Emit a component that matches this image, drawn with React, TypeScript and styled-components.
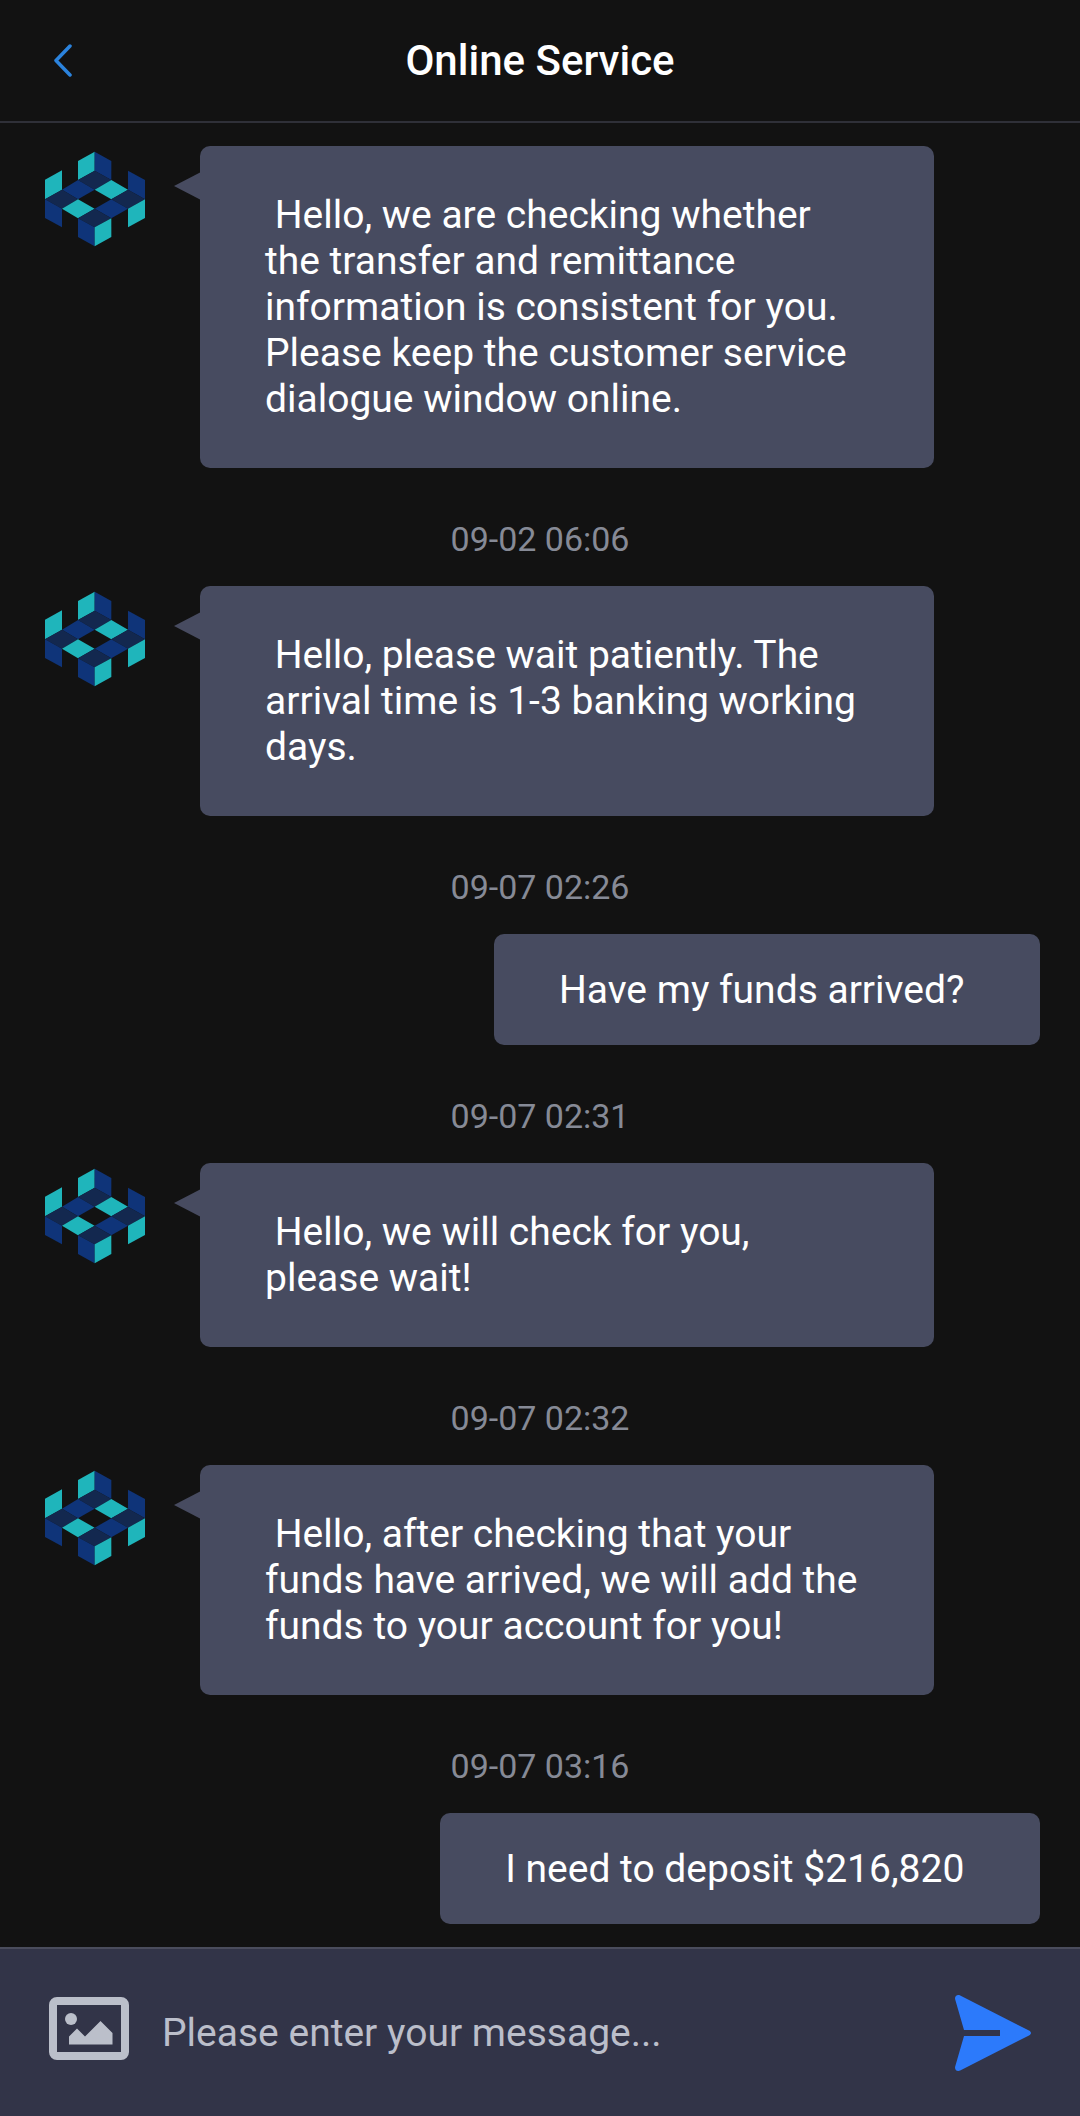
import React, { useState } from "react";
import styled, { createGlobalStyle } from "styled-components";

const GlobalStyle = createGlobalStyle`
  *, *::before, *::after { box-sizing: border-box; }
  body {
    margin: 0;
    background: #121212;
    color: #ffffff;
    font-family: Roboto, "Noto Sans", sans-serif;
    font-size: 39px;
    line-height: 46px;
  }
`;

const Page = styled.div`
  display: flex;
  flex-direction: column;
  min-height: 100vh;
`;

const Header = styled.header`
  display: grid;
  grid-template-columns: 128px 1fr 128px;
  align-items: center;
  border-bottom: 2px solid #2f3038;
`;

const Title = styled.h1`
  margin: 0;
  padding: 38px 0 37px;
  font-size: 42px;
  font-weight: 500;
  line-height: 46px;
  text-align: center;
`;

const IconButton = styled.button`
  display: flex;
  align-items: center;
  flex: none;
  padding: 0;
  border: 0;
  background: none;
  cursor: pointer;
`;

const BackButton = styled(IconButton)`
  height: 100%;
  padding-left: 53px;
`;

const Chat = styled.main`
  flex: 1;
  padding: 23px 40px 23px 44px;
`;

const Time = styled.time`
  display: block;
  margin: 51px 0 27px;
  padding-right: 4px;
  color: #868a96;
  font-size: 34px;
  line-height: 40px;
  text-align: center;
`;

const Row = styled.div<{ $own: boolean }>`
  display: flex;
  align-items: flex-start;
  justify-content: ${(p) => (p.$own ? "flex-end" : "flex-start")};
  gap: 54px;
  padding-right: ${(p) => (p.$own ? "0" : "106px")};
`;

const Avatar = styled.svg`
  flex: none;
  width: 102px;
  height: 96px;
  margin-top: 5px;
`;

const Bubble = styled.p<{ $own: boolean }>`
  position: relative;
  margin: 0;
  padding: ${(p) => (p.$own ? "33px 66px 32px 65px" : "46px 65px")};
  border-radius: 10px;
  background: #474b60;
  white-space: pre-wrap;

  &::before {
    content: "";
    display: ${(p) => (p.$own ? "none" : "block")};
    position: absolute;
    top: 26px;
    left: -26px;
    width: 27px;
    height: 28px;
    background: inherit;
    clip-path: polygon(0 50%, 100% 0, 100% 100%);
  }
`;

const Composer = styled.form`
  display: flex;
  align-items: center;
  height: 169px;
  padding: 0 48px 0 49px;
  border-top: 2px solid #4a4c5c;
  background: #323448;
`;

const MessageInput = styled.input`
  flex: 1;
  min-width: 0;
  margin: 0 33px;
  padding: 0;
  border: 0;
  outline: 0;
  background: none;
  color: #ffffff;
  font: inherit;

  &::placeholder {
    color: #bbbeca;
    opacity: 1;
  }
`;

const TEAL = "#1fb5bb";
const BLUE = "#0f3479";
const NAVY = "#13284f";

const cubeFaces: [string, string][] = [
  [TEAL, "144,93 194,65 194,122 144,150"],
  [BLUE, "194,65 244,93 244,150 194,122"],
  [TEAL, "45,149 96,121 96,179 45,208"],
  [BLUE, "294,122 345,150 345,208 294,179"],
  [NAVY, "144,150 194,122 244,150 194,179"],
  [BLUE, "96,179 144,150 194,179 144,208"],
  [TEAL, "194,179 244,150 294,179 244,208"],
  [NAVY, "45,208 96,179 144,208 96,236"],
  [NAVY, "244,208 294,179 345,208 294,236"],
  [TEAL, "96,236 144,208 194,236 144,265"],
  [BLUE, "194,236 244,208 294,236 244,265"],
  [NAVY, "144,265 194,236 244,265 194,292"],
  [BLUE, "45,208 96,236 96,292 45,264"],
  [TEAL, "294,236 345,208 345,264 294,292"],
  [BLUE, "144,265 194,292 194,349 144,321"],
  [TEAL, "194,292 244,265 244,321 194,349"],
];

const AgentAvatar = () => (
  <Avatar viewBox="42 63 306 288" role="img" aria-label="Support agent">
    {cubeFaces.map(([fill, points]) => (
      <polygon key={points} fill={fill} points={points} />
    ))}
  </Avatar>
);

type Message = { time?: string; own?: boolean; text: string };

const messages: Message[] = [
  {
    text: " Hello, we are checking whether the transfer and remittance information is consistent for you. Please keep the customer service dialogue window online.",
  },
  {
    time: "09-02 06:06",
    text: " Hello, please wait patiently. The arrival time is 1-3 banking working days.",
  },
  { time: "09-07 02:26", own: true, text: "Have my funds arrived? " },
  { time: "09-07 02:31", text: " Hello, we will check for you, please wait!" },
  {
    time: "09-07 02:32",
    text: " Hello, after checking that your funds have arrived, we will add the funds to your account for you!",
  },
  { time: "09-07 03:16", own: true, text: "I need to deposit $216,820 " },
];

export default function App() {
  const [draft, setDraft] = useState("");

  return (
    <Page>
      <GlobalStyle />
      <Header>
        <BackButton type="button" aria-label="Back">
          <svg width="20" height="34" viewBox="0 0 20 34" fill="none">
            <path
              d="M17 2 3 16.500l14 14.500"
              stroke="#2b83dd"
              strokeWidth="3.500"
              strokeLinecap="round"
              strokeLinejoin="round"
            />
          </svg>
        </BackButton>
        <Title>Online Service</Title>
      </Header>

      <Chat>
        {messages.map(({ time, own = false, text }) => (
          <React.Fragment key={text}>
            {time && <Time>{time}</Time>}
            <Row $own={own}>
              {!own && <AgentAvatar />}
              <Bubble $own={own}>{text}</Bubble>
            </Row>
          </React.Fragment>
        ))}
      </Chat>

      <Composer onSubmit={(e) => e.preventDefault()}>
        <IconButton type="button" aria-label="Attach a picture">
          <svg width="80" height="72" viewBox="0 0 80 72" fill="#bbbfca">
            <path
              fillRule="evenodd"
              d="M8 0h64a8 8 0 0 1 8 8v47a8 8 0 0 1-8 8H8a8 8 0 0 1-8-8V8a8 8 0 0 1 8-8Zm0 8v47h64V8Z"
            />
            <circle cx="22" cy="22" r="6" />
            <path d="M20 47.500v-8l8-8 8 8 15.500-15.500L63.500 36v11.500Z" />
          </svg>
        </IconButton>
        <MessageInput
          type="text"
          aria-label="Message"
          placeholder="Please enter your message..."
          value={draft}
          onChange={(e) => setDraft(e.target.value)}
        />
        <IconButton type="submit" aria-label="Send">
          <svg width="78" height="78" viewBox="0 0 78 78" fill="#2c7afb">
            <path d="M10 36 1.200 5.500C.3 2.200 3.200 0 6.200 1.500L75 36.500c2.600 1.400 2.600 3.600 0 5L6.200 76.500c-3 1.500-5.900-.7-5-4L10 42h36v-6Z" />
          </svg>
        </IconButton>
      </Composer>
    </Page>
  );
}
